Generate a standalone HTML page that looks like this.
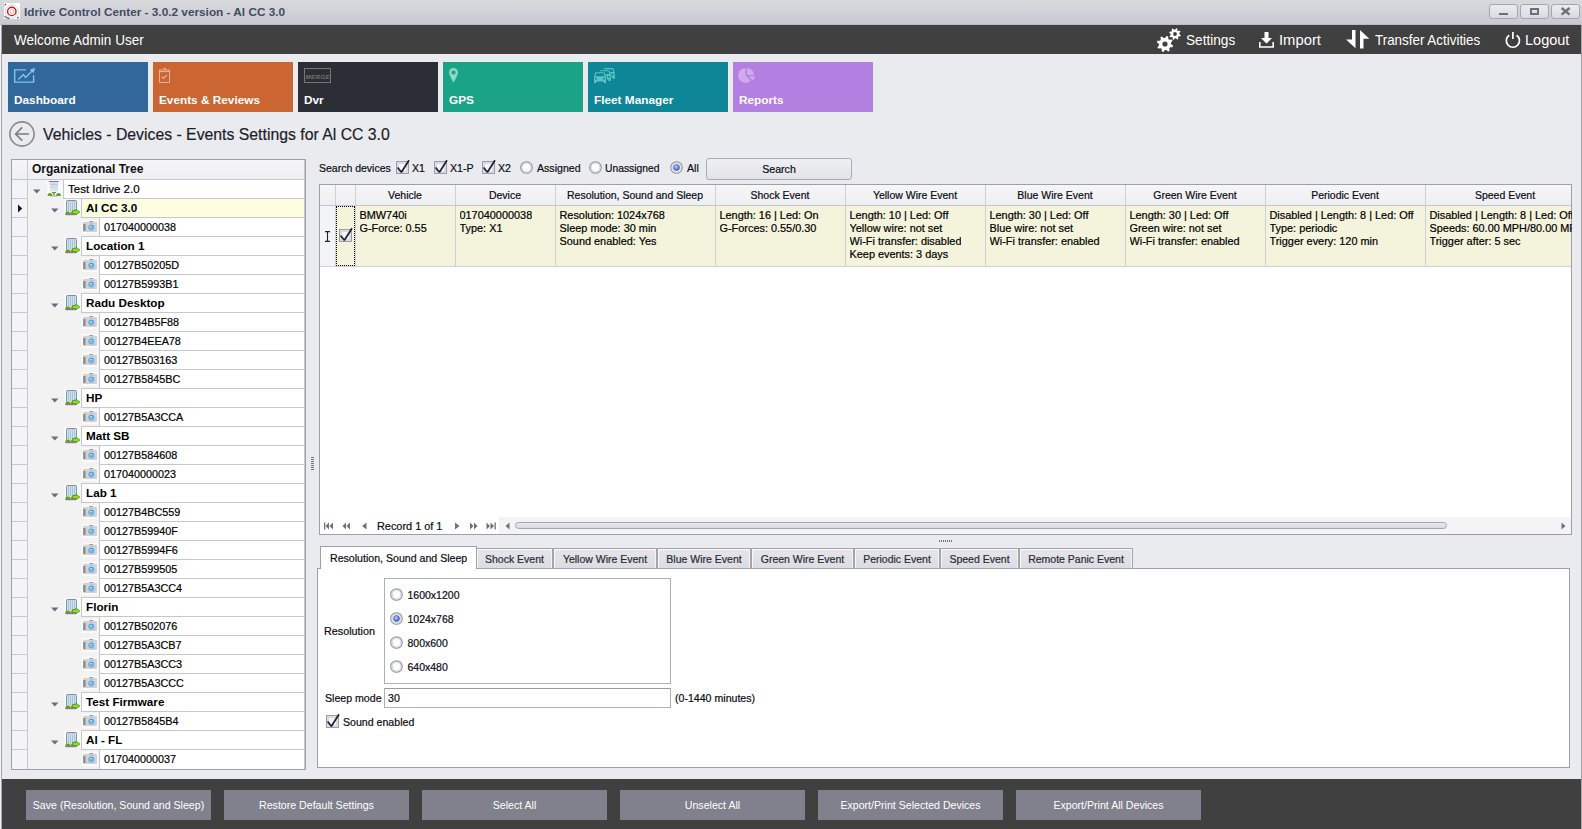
<!DOCTYPE html>
<html><head><meta charset="utf-8"><style>
*{box-sizing:border-box;margin:0;padding:0}
html,body{width:1582px;height:829px;overflow:hidden}
body{position:relative;background:#eaebef;font-family:"Liberation Sans",sans-serif;font-size:10.8px;color:#1e1e1e}
.a{position:absolute}
.t{position:absolute;white-space:nowrap;line-height:13px;-webkit-text-stroke:0.2px currentColor}
</style></head><body>
<div class="a" style="left:0;top:0;width:1px;height:829px;background:#f4f4f6"></div>
<div class="a" style="left:1px;top:25px;width:1px;height:804px;background:#a3a4ae"></div>
<div class="a" style="left:1581px;top:25px;width:1px;height:804px;background:#a3a4ae"></div>
<div class="a" style="left:0;top:0;width:1582px;height:25px;background:linear-gradient(#d9dade,#c8c9d1)"></div>
<div class="a" style="left:0;top:24px;width:1582px;height:1px;background:#babbc4"></div>
<svg class="a" style="left:4px;top:3px" width="16" height="16" viewBox="0 0 16 16">
<rect x="0" y="0" width="16" height="16" fill="#fdfdfd"/>
<circle cx="7.8" cy="8.4" r="6.6" fill="none" stroke="#d0d0d4" stroke-width="0.8"/>
<path d="M0.6 2.4 L2.2 0.8 M0.6 13.2 A7.3 7.3 0 0 0 5.4 15.6 M13.2 15.4 L14.6 14" fill="none" stroke="#555" stroke-width="1.1"/>
<circle cx="7.8" cy="8.4" r="4.2" fill="none" stroke="#e8101a" stroke-width="1.4"/>
<circle cx="7.8" cy="8.4" r="1.9" fill="none" stroke="#b4b4b8" stroke-width="0.7"/>
</svg>
<div class="t" style="left:24px;top:5px;font-size:11.8px;font-weight:bold;color:#434b62;line-height:14px;-webkit-text-stroke:0">Idrive Control Center - 3.0.2 version - Al CC 3.0</div>
<div class="a" style="left:1489px;top:4px;width:29px;height:15px;border:1px solid #a4a6b2;border-radius:3px;background:linear-gradient(#ececef,#d9dadf)"></div>
<div class="a" style="left:1520px;top:4px;width:29px;height:15px;border:1px solid #a4a6b2;border-radius:3px;background:linear-gradient(#ececef,#d9dadf)"></div>
<div class="a" style="left:1551px;top:4px;width:29px;height:15px;border:1px solid #a4a6b2;border-radius:3px;background:linear-gradient(#ececef,#d9dadf)"></div>
<div class="a" style="left:1499px;top:13px;width:9px;height:2px;background:#6c6e7a"></div>
<div class="a" style="left:1530px;top:8px;width:9px;height:7px;border:2px solid #6c6e7a"></div>
<svg class="a" style="left:1560px;top:7px" width="11" height="9" viewBox="0 0 11 9"><path d="M1.6 1 L9.6 7.6 M9.6 1 L1.6 7.6" stroke="#6c6e7a" stroke-width="2.3"/></svg>
<div class="a" style="left:2px;top:25px;width:1579px;height:29px;background:#404040"></div>
<div class="t" style="left:14px;top:32px;font-size:14.5px;color:#fff;line-height:16px;transform:scaleX(0.932);transform-origin:0 0;-webkit-text-stroke:0">Welcome Admin User</div>
<svg class="a" style="left:1155px;top:26px" width="28" height="28" viewBox="0 0 28 28">
<path fill="#fff" fill-rule="evenodd" d="M16.00 18.00 L18.04 19.60 L17.58 21.14 L14.99 21.33 L14.24 22.24 L14.56 24.82 L13.14 25.58 L11.17 23.88 L10.00 24.00 L8.40 26.04 L6.86 25.58 L6.67 22.99 L5.76 22.24 L3.18 22.56 L2.42 21.14 L4.12 19.17 L4.00 18.00 L1.96 16.40 L2.42 14.86 L5.01 14.67 L5.76 13.76 L5.44 11.18 L6.86 10.42 L8.83 12.12 L10.00 12.00 L11.60 9.96 L13.14 10.42 L13.33 13.01 L14.24 13.76 L16.82 13.44 L17.58 14.86 L15.88 16.83 Z M12.60 18.00 A2.6 2.6 0 1 0 7.40 18.00 A2.6 2.6 0 1 0 12.60 18.00 Z"/>
<path fill="#fff" fill-rule="evenodd" d="M24.30 8.00 L25.79 9.15 L25.45 10.26 L23.58 10.39 L23.04 11.04 L23.28 12.91 L22.26 13.45 L20.84 12.22 L20.00 12.30 L18.85 13.79 L17.74 13.45 L17.61 11.58 L16.96 11.04 L15.09 11.28 L14.55 10.26 L15.78 8.84 L15.70 8.00 L14.21 6.85 L14.55 5.74 L16.42 5.61 L16.96 4.96 L16.72 3.09 L17.74 2.55 L19.16 3.78 L20.00 3.70 L21.15 2.21 L22.26 2.55 L22.39 4.42 L23.04 4.96 L24.91 4.72 L25.45 5.74 L24.22 7.16 Z M21.90 8.00 A1.9 1.9 0 1 0 18.10 8.00 A1.9 1.9 0 1 0 21.90 8.00 Z"/>
</svg>
<div class="t" style="left:1186px;top:32px;font-size:14.5px;color:#fff;line-height:16px;transform:scaleX(0.94);transform-origin:0 0;-webkit-text-stroke:0">Settings</div>
<svg class="a" style="left:1258px;top:31px" width="18" height="18" viewBox="0 0 18 18">
<path fill="#fff" d="M6.5 1 H10.5 V7 H14 L8.5 12.5 L3 7 H6.5 Z"/>
<path fill="none" stroke="#fff" stroke-width="1.6" d="M1.8 11 V16 H15.2 V11"/>
</svg>
<div class="t" style="left:1279px;top:32px;font-size:14.5px;color:#fff;line-height:16px;transform:scaleX(1.02);transform-origin:0 0;-webkit-text-stroke:0">Import</div>
<svg class="a" style="left:1345px;top:29px" width="26" height="21" viewBox="0 0 26 21">
<path fill="#fff" d="M7 1 H10.5 V19.3 L1 10.5 H7 Z"/>
<path fill="#fff" d="M15 19.6 H18.5 V9.7 H24.3 L15 1 Z"/>
</svg>
<div class="t" style="left:1375px;top:32px;font-size:14.5px;color:#fff;line-height:16px;transform:scaleX(0.924);transform-origin:0 0;-webkit-text-stroke:0">Transfer Activities</div>
<svg class="a" style="left:1504px;top:31px" width="18" height="18" viewBox="0 0 18 18">
<path fill="none" stroke="#fff" stroke-width="1.7" d="M5.2 4.2 A6.6 6.6 0 1 0 12.6 4.2"/>
<path stroke="#fff" stroke-width="1.7" d="M8.9 1 V8"/>
</svg>
<div class="t" style="left:1525px;top:32px;font-size:14.5px;color:#fff;line-height:16px;-webkit-text-stroke:0">Logout</div>
<div class="a" style="left:8px;top:62px;width:140px;height:50px;background:#32679a"></div>
<div class="t" style="left:14px;top:93px;font-size:11.8px;font-weight:bold;color:#fff;line-height:14px;-webkit-text-stroke:0">Dashboard</div>
<div class="a" style="left:153px;top:62px;width:140px;height:50px;background:#cb6633"></div>
<div class="t" style="left:159px;top:93px;font-size:11.8px;font-weight:bold;color:#fff;line-height:14px;-webkit-text-stroke:0">Events &amp; Reviews</div>
<div class="a" style="left:298px;top:62px;width:140px;height:50px;background:#2b2e34"></div>
<div class="t" style="left:304px;top:93px;font-size:11.8px;font-weight:bold;color:#fff;line-height:14px;-webkit-text-stroke:0">Dvr</div>
<div class="a" style="left:443px;top:62px;width:140px;height:50px;background:#1aa386"></div>
<div class="t" style="left:449px;top:93px;font-size:11.8px;font-weight:bold;color:#fff;line-height:14px;-webkit-text-stroke:0">GPS</div>
<div class="a" style="left:588px;top:62px;width:140px;height:50px;background:#0e8698"></div>
<div class="t" style="left:594px;top:93px;font-size:11.8px;font-weight:bold;color:#fff;line-height:14px;-webkit-text-stroke:0">Fleet Manager</div>
<div class="a" style="left:733px;top:62px;width:140px;height:50px;background:#b37fe0"></div>
<div class="t" style="left:739px;top:93px;font-size:11.8px;font-weight:bold;color:#fff;line-height:14px;-webkit-text-stroke:0">Reports</div>
<svg class="a" style="left:8px;top:62px" width="40" height="30" viewBox="0 0 40 30">
<path fill="none" stroke="#7fc4ef" stroke-width="1.4" d="M18 7.9 H6.7 V20.1 H25.6 V13.2"/>
<path fill="none" stroke="#7fc4ef" stroke-width="1.4" d="M10.3 17.6 L15.4 12.5 L17.6 15.4 L24.5 8.5"/>
<path fill="#7fc4ef" d="M27 6 L21.8 7.4 L25.6 11.2 Z"/>
</svg>
<svg class="a" style="left:153px;top:62px" width="30" height="30" viewBox="0 0 30 30">
<g fill="none" stroke="#eab59a" stroke-width="1">
<path d="M6.5 8 H16.5 V20.5 H6.5 Z"/><path d="M6.5 9.6 H16.5"/><path d="M10.5 6.5 H12.5 V8"/>
<path d="M8.8 14.6 L10.5 16.4 L13.8 12.8" stroke-width="1.2"/>
</g></svg>
<svg class="a" style="left:298px;top:62px" width="40" height="30" viewBox="0 0 40 30">
<rect x="6.5" y="6.5" width="26" height="14" fill="none" stroke="#767676" stroke-width="1"/>
<text x="19.8" y="17.3" font-family="Liberation Sans" font-size="6.2" font-weight="bold" font-style="italic" fill="#737373" text-anchor="middle" letter-spacing="0.4">MERGE</text>
</svg>
<svg class="a" style="left:443px;top:62px" width="30" height="30" viewBox="0 0 30 30">
<path fill="#8fd6c4" fill-rule="evenodd" d="M10.5 6 A4.5 4.5 0 0 1 15 10.5 C15 12.5 13 16 10.5 20.8 C8 16 6 12.5 6 10.5 A4.5 4.5 0 0 1 10.5 6 Z M10.5 8.4 A2.1 2.1 0 1 0 10.5 12.6 A2.1 2.1 0 1 0 10.5 8.4 Z"/>
</svg>
<svg class="a" style="left:588px;top:62px" width="40" height="30" viewBox="0 0 40 30"><g transform="translate(14.8 6)"><path d="M0.9 4.2 L1.6 1 Q1.8 0.6 2.3 0.6 H9.7 Q10.2 0.6 10.4 1 L11.1 4.2" fill="none" stroke="#5bc4c4" stroke-width="1.1"/><path fill-rule="evenodd" d="M0 4 H12 V10.8 H9.7 V9.4 H2.3 V10.8 H0 Z M2 5.6 A0.95 0.95 0 1 0 2 7.5 A0.95 0.95 0 1 0 2 5.6 Z M10 5.6 A0.95 0.95 0 1 0 10 7.5 A0.95 0.95 0 1 0 10 5.6 Z" fill="#5bc4c4"/></g><g transform="translate(10.8 8.1)"><path d="M1.4 -0.6 H10.6 L11.8 3.3 L12.8 3.8 V11.4 H-0.8 V3.8 L0.2 3.3 Z" fill="#0e8698"/><path d="M0.9 4.2 L1.6 1 Q1.8 0.6 2.3 0.6 H9.7 Q10.2 0.6 10.4 1 L11.1 4.2" fill="none" stroke="#5bc4c4" stroke-width="1.1"/><path fill-rule="evenodd" d="M0 4 H12 V10.8 H9.7 V9.4 H2.3 V10.8 H0 Z M2 5.6 A0.95 0.95 0 1 0 2 7.5 A0.95 0.95 0 1 0 2 5.6 Z M10 5.6 A0.95 0.95 0 1 0 10 7.5 A0.95 0.95 0 1 0 10 5.6 Z" fill="#5bc4c4"/></g><g transform="translate(6 10.2)"><path d="M1.4 -0.6 H10.6 L11.8 3.3 L12.8 3.8 V11.4 H-0.8 V3.8 L0.2 3.3 Z" fill="#0e8698"/><path d="M0.9 4.2 L1.6 1 Q1.8 0.6 2.3 0.6 H9.7 Q10.2 0.6 10.4 1 L11.1 4.2" fill="none" stroke="#5bc4c4" stroke-width="1.1"/><path fill-rule="evenodd" d="M0 4 H12 V10.8 H9.7 V9.4 H2.3 V10.8 H0 Z M2 5.6 A0.95 0.95 0 1 0 2 7.5 A0.95 0.95 0 1 0 2 5.6 Z M10 5.6 A0.95 0.95 0 1 0 10 7.5 A0.95 0.95 0 1 0 10 5.6 Z" fill="#5bc4c4"/></g></svg>
<svg class="a" style="left:733px;top:62px" width="40" height="30" viewBox="0 0 40 30">
<g fill="#d1aaee">
<path d="M12.6 6.2 V13.4 L17.6 18.6 A7.3 7.3 0 1 1 12.6 6.2 Z"/>
<path d="M14 6 A7 7 0 0 1 21 13 H14 Z"/>
<path d="M15.6 14.2 H22 A7.2 7.2 0 0 1 20 18.8 Z"/>
</g></svg>
<svg class="a" style="left:8px;top:120px" width="28" height="28" viewBox="0 0 28 28">
<circle cx="14" cy="14" r="12.1" fill="none" stroke="#8a8a8e" stroke-width="1.6"/>
<path fill="none" stroke="#7c7c80" stroke-width="1.6" d="M20.9 14 H7.6 M14.2 7.4 L7.6 14 L14.2 20.6"/>
</svg>
<div class="t" style="left:43px;top:125px;font-size:15.8px;color:#1c1d2c;line-height:19px">Vehicles - Devices - Events Settings for Al CC 3.0</div>
<svg width="0" height="0" style="position:absolute"><defs><linearGradient id="lens" x1="0" y1="0" x2="0" y2="1"><stop offset="0" stop-color="#1e98e0"/><stop offset="0.55" stop-color="#50c8f8"/><stop offset="1" stop-color="#a890f0"/></linearGradient></defs></svg>
<div class="a" style="left:11px;top:159px;width:295px;height:611px;border:1px solid #9e9fab;background:#f2f2f2"></div>
<div class="a" style="left:12px;top:160px;width:293px;height:19px;background:linear-gradient(#f6f6f8,#eeeff2)"></div>
<div class="a" style="left:12px;top:179px;width:292px;height:1px;background:#c3c4cc"></div>
<div class="a" style="left:12px;top:180px;width:15px;height:589px;background:#f3f4f6"></div>
<div class="a" style="left:27px;top:160px;width:1px;height:609px;background:#c8c9d1"></div>
<div class="a" style="left:304px;top:160px;width:1px;height:609px;background:#c9c9cc"></div>
<div class="t" style="left:32px;top:162px;font-size:12px;font-weight:bold;color:#111;line-height:14px;-webkit-text-stroke:0">Organizational Tree</div>
<div class="a" style="left:12px;top:198px;width:15px;height:1px;background:#c8c9d1"></div>
<div class="a" style="left:63px;top:179px;width:241px;height:20px;border:1px solid #c6c7cc;border-right:0;background:#fff"></div>
<div class="t" style="left:68px;top:183px;font-size:11.5px;color:#000">Test Idrive 2.0</div>
<svg class="a" style="left:46px;top:180px" width="17" height="17" viewBox="0 0 17 17">
<rect x="1" y="0" width="15.5" height="17" fill="#f9f9f9"/>
<rect x="3" y="1" width="9.8" height="1" fill="#7c7c84"/>
<rect x="4" y="2" width="8" height="9.5" fill="#e4e4e6"/>
<rect x="4" y="3.5" width="8" height="1.6" fill="#9fd0f8"/>
<rect x="4" y="6.5" width="8" height="1" fill="#d0d0d4"/>
<rect x="4" y="8.5" width="8" height="1.2" fill="#c4e8fa"/>
<rect x="6" y="12" width="4" height="1" fill="#3a9a9a"/>
<rect x="7" y="13" width="2" height="2.6" fill="#e0980c"/>
<path d="M1.5 16 Q1.5 13 4 13 Q6.5 13 6.5 16 Z M10 16 Q10 13 12.5 13 Q15 13 15 16 Z" fill="#58a820"/>
<rect x="4" y="15.6" width="8" height="0.8" fill="#9a9ac8"/>
</svg>
<svg class="a" style="left:33px;top:189px" width="8" height="5" viewBox="0 0 8 5"><path d="M0 0.5 H7.5 L3.75 4.5 Z" fill="#6c6e7c"/></svg>
<div class="a" style="left:12px;top:217px;width:15px;height:1px;background:#c8c9d1"></div>
<div class="a" style="left:81px;top:198px;width:223px;height:20px;border:1px solid #c6c7cc;border-right:0;background:#fdfddf"></div>
<div class="t" style="left:86px;top:201px;font-size:11.7px;font-weight:bold;color:#000;-webkit-text-stroke:0">Al CC 3.0</div>
<svg class="a" style="left:64px;top:199px" width="17" height="17" viewBox="0 0 17 17">
<rect x="0" y="0" width="17" height="17" fill="#f9f9f9"/>
<rect x="2.5" y="1.5" width="10" height="11" fill="#b4b4b8"/>
<g fill="#c4ecff"><rect x="3.1" y="2" width="1.1" height="10.5"/><rect x="5.1" y="2" width="1.1" height="10.5"/><rect x="7.1" y="2" width="1.1" height="10.5"/><rect x="9.1" y="2" width="1.1" height="10.5"/><rect x="11.1" y="2" width="1.1" height="10.5"/></g>
<rect x="3" y="2" width="9.5" height="3" fill="#d8c8ff" opacity="0.35"/>
<path d="M2.5 12.8 V2.6 Q2.5 1.5 3.6 1.5 H11.4 Q12.5 1.5 12.5 2.6 V12.8" fill="none" stroke="#6a9aa0" stroke-width="0.9"/>
<path d="M3.6 1.5 H11.4" stroke="#8a8a90" stroke-width="0.9"/>
<path d="M1.2 15.6 Q1.2 12.6 3.6 12.6 Q6.4 12.6 6.8 15.6 Z" fill="#54a82c"/>
<rect x="6.6" y="13" width="2.4" height="2.4" fill="#e4701e"/>
<rect x="1.5" y="15.2" width="10.5" height="1" fill="#7a6080"/>
<path d="M8.4 11.6 H11.9 V10.2 L15.8 13 L11.9 15.8 V14.4 H8.4 Z" fill="#a4d818" stroke="#229a16" stroke-width="0.8"/>
</svg>
<svg class="a" style="left:51px;top:208px" width="8" height="5" viewBox="0 0 8 5"><path d="M0 0.5 H7.5 L3.75 4.5 Z" fill="#6c6e7c"/></svg>
<div class="a" style="left:12px;top:236px;width:15px;height:1px;background:#c8c9d1"></div>
<div class="a" style="left:99px;top:217px;width:205px;height:20px;border:1px solid #c6c7cc;border-right:0;background:#fff"></div>
<div class="t" style="left:104px;top:221px;font-size:10.8px;color:#000">017040000038</div>
<svg class="a" style="left:82px;top:220px" width="16" height="15" viewBox="0 0 16 15">
<rect x="0" y="0" width="16" height="14" fill="#fbfbfb"/>
<rect x="1" y="1.8" width="14" height="10.2" rx="1" fill="#d2d2d5"/>
<rect x="1.2" y="4" width="2.3" height="7" fill="#8a8a8e"/>
<rect x="7.4" y="1" width="3.6" height="1" fill="#9a9aa0"/>
<rect x="8" y="3" width="3" height="1" fill="#8ec8f8"/>
<circle cx="9.3" cy="7.6" r="3.2" fill="#b0b0b8"/>
<circle cx="9.3" cy="7.6" r="2.6" fill="url(#lens)"/>
<ellipse cx="9" cy="6.6" rx="1.1" ry="0.7" fill="#e0f4ff"/>
</svg>
<div class="a" style="left:12px;top:255px;width:15px;height:1px;background:#c8c9d1"></div>
<div class="a" style="left:81px;top:236px;width:223px;height:20px;border:1px solid #c6c7cc;border-right:0;background:#fff"></div>
<div class="t" style="left:86px;top:239px;font-size:11.7px;font-weight:bold;color:#000;-webkit-text-stroke:0">Location 1</div>
<svg class="a" style="left:64px;top:237px" width="17" height="17" viewBox="0 0 17 17">
<rect x="0" y="0" width="17" height="17" fill="#f9f9f9"/>
<rect x="2.5" y="1.5" width="10" height="11" fill="#b4b4b8"/>
<g fill="#c4ecff"><rect x="3.1" y="2" width="1.1" height="10.5"/><rect x="5.1" y="2" width="1.1" height="10.5"/><rect x="7.1" y="2" width="1.1" height="10.5"/><rect x="9.1" y="2" width="1.1" height="10.5"/><rect x="11.1" y="2" width="1.1" height="10.5"/></g>
<rect x="3" y="2" width="9.5" height="3" fill="#d8c8ff" opacity="0.35"/>
<path d="M2.5 12.8 V2.6 Q2.5 1.5 3.6 1.5 H11.4 Q12.5 1.5 12.5 2.6 V12.8" fill="none" stroke="#6a9aa0" stroke-width="0.9"/>
<path d="M3.6 1.5 H11.4" stroke="#8a8a90" stroke-width="0.9"/>
<path d="M1.2 15.6 Q1.2 12.6 3.6 12.6 Q6.4 12.6 6.8 15.6 Z" fill="#54a82c"/>
<rect x="6.6" y="13" width="2.4" height="2.4" fill="#e4701e"/>
<rect x="1.5" y="15.2" width="10.5" height="1" fill="#7a6080"/>
<path d="M8.4 11.6 H11.9 V10.2 L15.8 13 L11.9 15.8 V14.4 H8.4 Z" fill="#a4d818" stroke="#229a16" stroke-width="0.8"/>
</svg>
<svg class="a" style="left:51px;top:246px" width="8" height="5" viewBox="0 0 8 5"><path d="M0 0.5 H7.5 L3.75 4.5 Z" fill="#6c6e7c"/></svg>
<div class="a" style="left:12px;top:274px;width:15px;height:1px;background:#c8c9d1"></div>
<div class="a" style="left:99px;top:255px;width:205px;height:20px;border:1px solid #c6c7cc;border-right:0;background:#fff"></div>
<div class="t" style="left:104px;top:259px;font-size:10.8px;color:#000">00127B50205D</div>
<svg class="a" style="left:82px;top:258px" width="16" height="15" viewBox="0 0 16 15">
<rect x="0" y="0" width="16" height="14" fill="#fbfbfb"/>
<rect x="1" y="1.8" width="14" height="10.2" rx="1" fill="#d2d2d5"/>
<rect x="1.2" y="4" width="2.3" height="7" fill="#8a8a8e"/>
<rect x="7.4" y="1" width="3.6" height="1" fill="#9a9aa0"/>
<rect x="8" y="3" width="3" height="1" fill="#8ec8f8"/>
<circle cx="9.3" cy="7.6" r="3.2" fill="#b0b0b8"/>
<circle cx="9.3" cy="7.6" r="2.6" fill="url(#lens)"/>
<ellipse cx="9" cy="6.6" rx="1.1" ry="0.7" fill="#e0f4ff"/>
</svg>
<div class="a" style="left:12px;top:293px;width:15px;height:1px;background:#c8c9d1"></div>
<div class="a" style="left:99px;top:274px;width:205px;height:20px;border:1px solid #c6c7cc;border-right:0;background:#fff"></div>
<div class="t" style="left:104px;top:278px;font-size:10.8px;color:#000">00127B5993B1</div>
<svg class="a" style="left:82px;top:277px" width="16" height="15" viewBox="0 0 16 15">
<rect x="0" y="0" width="16" height="14" fill="#fbfbfb"/>
<rect x="1" y="1.8" width="14" height="10.2" rx="1" fill="#d2d2d5"/>
<rect x="1.2" y="4" width="2.3" height="7" fill="#8a8a8e"/>
<rect x="7.4" y="1" width="3.6" height="1" fill="#9a9aa0"/>
<rect x="8" y="3" width="3" height="1" fill="#8ec8f8"/>
<circle cx="9.3" cy="7.6" r="3.2" fill="#b0b0b8"/>
<circle cx="9.3" cy="7.6" r="2.6" fill="url(#lens)"/>
<ellipse cx="9" cy="6.6" rx="1.1" ry="0.7" fill="#e0f4ff"/>
</svg>
<div class="a" style="left:12px;top:312px;width:15px;height:1px;background:#c8c9d1"></div>
<div class="a" style="left:81px;top:293px;width:223px;height:20px;border:1px solid #c6c7cc;border-right:0;background:#fff"></div>
<div class="t" style="left:86px;top:296px;font-size:11.7px;font-weight:bold;color:#000;-webkit-text-stroke:0">Radu Desktop</div>
<svg class="a" style="left:64px;top:294px" width="17" height="17" viewBox="0 0 17 17">
<rect x="0" y="0" width="17" height="17" fill="#f9f9f9"/>
<rect x="2.5" y="1.5" width="10" height="11" fill="#b4b4b8"/>
<g fill="#c4ecff"><rect x="3.1" y="2" width="1.1" height="10.5"/><rect x="5.1" y="2" width="1.1" height="10.5"/><rect x="7.1" y="2" width="1.1" height="10.5"/><rect x="9.1" y="2" width="1.1" height="10.5"/><rect x="11.1" y="2" width="1.1" height="10.5"/></g>
<rect x="3" y="2" width="9.5" height="3" fill="#d8c8ff" opacity="0.35"/>
<path d="M2.5 12.8 V2.6 Q2.5 1.5 3.6 1.5 H11.4 Q12.5 1.5 12.5 2.6 V12.8" fill="none" stroke="#6a9aa0" stroke-width="0.9"/>
<path d="M3.6 1.5 H11.4" stroke="#8a8a90" stroke-width="0.9"/>
<path d="M1.2 15.6 Q1.2 12.6 3.6 12.6 Q6.4 12.6 6.8 15.6 Z" fill="#54a82c"/>
<rect x="6.6" y="13" width="2.4" height="2.4" fill="#e4701e"/>
<rect x="1.5" y="15.2" width="10.5" height="1" fill="#7a6080"/>
<path d="M8.4 11.6 H11.9 V10.2 L15.8 13 L11.9 15.8 V14.4 H8.4 Z" fill="#a4d818" stroke="#229a16" stroke-width="0.8"/>
</svg>
<svg class="a" style="left:51px;top:303px" width="8" height="5" viewBox="0 0 8 5"><path d="M0 0.5 H7.5 L3.75 4.5 Z" fill="#6c6e7c"/></svg>
<div class="a" style="left:12px;top:331px;width:15px;height:1px;background:#c8c9d1"></div>
<div class="a" style="left:99px;top:312px;width:205px;height:20px;border:1px solid #c6c7cc;border-right:0;background:#fff"></div>
<div class="t" style="left:104px;top:316px;font-size:10.8px;color:#000">00127B4B5F88</div>
<svg class="a" style="left:82px;top:315px" width="16" height="15" viewBox="0 0 16 15">
<rect x="0" y="0" width="16" height="14" fill="#fbfbfb"/>
<rect x="1" y="1.8" width="14" height="10.2" rx="1" fill="#d2d2d5"/>
<rect x="1.2" y="4" width="2.3" height="7" fill="#8a8a8e"/>
<rect x="7.4" y="1" width="3.6" height="1" fill="#9a9aa0"/>
<rect x="8" y="3" width="3" height="1" fill="#8ec8f8"/>
<circle cx="9.3" cy="7.6" r="3.2" fill="#b0b0b8"/>
<circle cx="9.3" cy="7.6" r="2.6" fill="url(#lens)"/>
<ellipse cx="9" cy="6.6" rx="1.1" ry="0.7" fill="#e0f4ff"/>
</svg>
<div class="a" style="left:12px;top:350px;width:15px;height:1px;background:#c8c9d1"></div>
<div class="a" style="left:99px;top:331px;width:205px;height:20px;border:1px solid #c6c7cc;border-right:0;background:#fff"></div>
<div class="t" style="left:104px;top:335px;font-size:10.8px;color:#000">00127B4EEA78</div>
<svg class="a" style="left:82px;top:334px" width="16" height="15" viewBox="0 0 16 15">
<rect x="0" y="0" width="16" height="14" fill="#fbfbfb"/>
<rect x="1" y="1.8" width="14" height="10.2" rx="1" fill="#d2d2d5"/>
<rect x="1.2" y="4" width="2.3" height="7" fill="#8a8a8e"/>
<rect x="7.4" y="1" width="3.6" height="1" fill="#9a9aa0"/>
<rect x="8" y="3" width="3" height="1" fill="#8ec8f8"/>
<circle cx="9.3" cy="7.6" r="3.2" fill="#b0b0b8"/>
<circle cx="9.3" cy="7.6" r="2.6" fill="url(#lens)"/>
<ellipse cx="9" cy="6.6" rx="1.1" ry="0.7" fill="#e0f4ff"/>
</svg>
<div class="a" style="left:12px;top:369px;width:15px;height:1px;background:#c8c9d1"></div>
<div class="a" style="left:99px;top:350px;width:205px;height:20px;border:1px solid #c6c7cc;border-right:0;background:#fff"></div>
<div class="t" style="left:104px;top:354px;font-size:10.8px;color:#000">00127B503163</div>
<svg class="a" style="left:82px;top:353px" width="16" height="15" viewBox="0 0 16 15">
<rect x="0" y="0" width="16" height="14" fill="#fbfbfb"/>
<rect x="1" y="1.8" width="14" height="10.2" rx="1" fill="#d2d2d5"/>
<rect x="1.2" y="4" width="2.3" height="7" fill="#8a8a8e"/>
<rect x="7.4" y="1" width="3.6" height="1" fill="#9a9aa0"/>
<rect x="8" y="3" width="3" height="1" fill="#8ec8f8"/>
<circle cx="9.3" cy="7.6" r="3.2" fill="#b0b0b8"/>
<circle cx="9.3" cy="7.6" r="2.6" fill="url(#lens)"/>
<ellipse cx="9" cy="6.6" rx="1.1" ry="0.7" fill="#e0f4ff"/>
</svg>
<div class="a" style="left:12px;top:388px;width:15px;height:1px;background:#c8c9d1"></div>
<div class="a" style="left:99px;top:369px;width:205px;height:20px;border:1px solid #c6c7cc;border-right:0;background:#fff"></div>
<div class="t" style="left:104px;top:373px;font-size:10.8px;color:#000">00127B5845BC</div>
<svg class="a" style="left:82px;top:372px" width="16" height="15" viewBox="0 0 16 15">
<rect x="0" y="0" width="16" height="14" fill="#fbfbfb"/>
<rect x="1" y="1.8" width="14" height="10.2" rx="1" fill="#d2d2d5"/>
<rect x="1.2" y="4" width="2.3" height="7" fill="#8a8a8e"/>
<rect x="7.4" y="1" width="3.6" height="1" fill="#9a9aa0"/>
<rect x="8" y="3" width="3" height="1" fill="#8ec8f8"/>
<circle cx="9.3" cy="7.6" r="3.2" fill="#b0b0b8"/>
<circle cx="9.3" cy="7.6" r="2.6" fill="url(#lens)"/>
<ellipse cx="9" cy="6.6" rx="1.1" ry="0.7" fill="#e0f4ff"/>
</svg>
<div class="a" style="left:12px;top:407px;width:15px;height:1px;background:#c8c9d1"></div>
<div class="a" style="left:81px;top:388px;width:223px;height:20px;border:1px solid #c6c7cc;border-right:0;background:#fff"></div>
<div class="t" style="left:86px;top:391px;font-size:11.7px;font-weight:bold;color:#000;-webkit-text-stroke:0">HP</div>
<svg class="a" style="left:64px;top:389px" width="17" height="17" viewBox="0 0 17 17">
<rect x="0" y="0" width="17" height="17" fill="#f9f9f9"/>
<rect x="2.5" y="1.5" width="10" height="11" fill="#b4b4b8"/>
<g fill="#c4ecff"><rect x="3.1" y="2" width="1.1" height="10.5"/><rect x="5.1" y="2" width="1.1" height="10.5"/><rect x="7.1" y="2" width="1.1" height="10.5"/><rect x="9.1" y="2" width="1.1" height="10.5"/><rect x="11.1" y="2" width="1.1" height="10.5"/></g>
<rect x="3" y="2" width="9.5" height="3" fill="#d8c8ff" opacity="0.35"/>
<path d="M2.5 12.8 V2.6 Q2.5 1.5 3.6 1.5 H11.4 Q12.5 1.5 12.5 2.6 V12.8" fill="none" stroke="#6a9aa0" stroke-width="0.9"/>
<path d="M3.6 1.5 H11.4" stroke="#8a8a90" stroke-width="0.9"/>
<path d="M1.2 15.6 Q1.2 12.6 3.6 12.6 Q6.4 12.6 6.8 15.6 Z" fill="#54a82c"/>
<rect x="6.6" y="13" width="2.4" height="2.4" fill="#e4701e"/>
<rect x="1.5" y="15.2" width="10.5" height="1" fill="#7a6080"/>
<path d="M8.4 11.6 H11.9 V10.2 L15.8 13 L11.9 15.8 V14.4 H8.4 Z" fill="#a4d818" stroke="#229a16" stroke-width="0.8"/>
</svg>
<svg class="a" style="left:51px;top:398px" width="8" height="5" viewBox="0 0 8 5"><path d="M0 0.5 H7.5 L3.75 4.5 Z" fill="#6c6e7c"/></svg>
<div class="a" style="left:12px;top:426px;width:15px;height:1px;background:#c8c9d1"></div>
<div class="a" style="left:99px;top:407px;width:205px;height:20px;border:1px solid #c6c7cc;border-right:0;background:#fff"></div>
<div class="t" style="left:104px;top:411px;font-size:10.8px;color:#000">00127B5A3CCA</div>
<svg class="a" style="left:82px;top:410px" width="16" height="15" viewBox="0 0 16 15">
<rect x="0" y="0" width="16" height="14" fill="#fbfbfb"/>
<rect x="1" y="1.8" width="14" height="10.2" rx="1" fill="#d2d2d5"/>
<rect x="1.2" y="4" width="2.3" height="7" fill="#8a8a8e"/>
<rect x="7.4" y="1" width="3.6" height="1" fill="#9a9aa0"/>
<rect x="8" y="3" width="3" height="1" fill="#8ec8f8"/>
<circle cx="9.3" cy="7.6" r="3.2" fill="#b0b0b8"/>
<circle cx="9.3" cy="7.6" r="2.6" fill="url(#lens)"/>
<ellipse cx="9" cy="6.6" rx="1.1" ry="0.7" fill="#e0f4ff"/>
</svg>
<div class="a" style="left:12px;top:445px;width:15px;height:1px;background:#c8c9d1"></div>
<div class="a" style="left:81px;top:426px;width:223px;height:20px;border:1px solid #c6c7cc;border-right:0;background:#fff"></div>
<div class="t" style="left:86px;top:429px;font-size:11.7px;font-weight:bold;color:#000;-webkit-text-stroke:0">Matt SB</div>
<svg class="a" style="left:64px;top:427px" width="17" height="17" viewBox="0 0 17 17">
<rect x="0" y="0" width="17" height="17" fill="#f9f9f9"/>
<rect x="2.5" y="1.5" width="10" height="11" fill="#b4b4b8"/>
<g fill="#c4ecff"><rect x="3.1" y="2" width="1.1" height="10.5"/><rect x="5.1" y="2" width="1.1" height="10.5"/><rect x="7.1" y="2" width="1.1" height="10.5"/><rect x="9.1" y="2" width="1.1" height="10.5"/><rect x="11.1" y="2" width="1.1" height="10.5"/></g>
<rect x="3" y="2" width="9.5" height="3" fill="#d8c8ff" opacity="0.35"/>
<path d="M2.5 12.8 V2.6 Q2.5 1.5 3.6 1.5 H11.4 Q12.5 1.5 12.5 2.6 V12.8" fill="none" stroke="#6a9aa0" stroke-width="0.9"/>
<path d="M3.6 1.5 H11.4" stroke="#8a8a90" stroke-width="0.9"/>
<path d="M1.2 15.6 Q1.2 12.6 3.6 12.6 Q6.4 12.6 6.8 15.6 Z" fill="#54a82c"/>
<rect x="6.6" y="13" width="2.4" height="2.4" fill="#e4701e"/>
<rect x="1.5" y="15.2" width="10.5" height="1" fill="#7a6080"/>
<path d="M8.4 11.6 H11.9 V10.2 L15.8 13 L11.9 15.8 V14.4 H8.4 Z" fill="#a4d818" stroke="#229a16" stroke-width="0.8"/>
</svg>
<svg class="a" style="left:51px;top:436px" width="8" height="5" viewBox="0 0 8 5"><path d="M0 0.5 H7.5 L3.75 4.5 Z" fill="#6c6e7c"/></svg>
<div class="a" style="left:12px;top:464px;width:15px;height:1px;background:#c8c9d1"></div>
<div class="a" style="left:99px;top:445px;width:205px;height:20px;border:1px solid #c6c7cc;border-right:0;background:#fff"></div>
<div class="t" style="left:104px;top:449px;font-size:10.8px;color:#000">00127B584608</div>
<svg class="a" style="left:82px;top:448px" width="16" height="15" viewBox="0 0 16 15">
<rect x="0" y="0" width="16" height="14" fill="#fbfbfb"/>
<rect x="1" y="1.8" width="14" height="10.2" rx="1" fill="#d2d2d5"/>
<rect x="1.2" y="4" width="2.3" height="7" fill="#8a8a8e"/>
<rect x="7.4" y="1" width="3.6" height="1" fill="#9a9aa0"/>
<rect x="8" y="3" width="3" height="1" fill="#8ec8f8"/>
<circle cx="9.3" cy="7.6" r="3.2" fill="#b0b0b8"/>
<circle cx="9.3" cy="7.6" r="2.6" fill="url(#lens)"/>
<ellipse cx="9" cy="6.6" rx="1.1" ry="0.7" fill="#e0f4ff"/>
</svg>
<div class="a" style="left:12px;top:483px;width:15px;height:1px;background:#c8c9d1"></div>
<div class="a" style="left:99px;top:464px;width:205px;height:20px;border:1px solid #c6c7cc;border-right:0;background:#fff"></div>
<div class="t" style="left:104px;top:468px;font-size:10.8px;color:#000">017040000023</div>
<svg class="a" style="left:82px;top:467px" width="16" height="15" viewBox="0 0 16 15">
<rect x="0" y="0" width="16" height="14" fill="#fbfbfb"/>
<rect x="1" y="1.8" width="14" height="10.2" rx="1" fill="#d2d2d5"/>
<rect x="1.2" y="4" width="2.3" height="7" fill="#8a8a8e"/>
<rect x="7.4" y="1" width="3.6" height="1" fill="#9a9aa0"/>
<rect x="8" y="3" width="3" height="1" fill="#8ec8f8"/>
<circle cx="9.3" cy="7.6" r="3.2" fill="#b0b0b8"/>
<circle cx="9.3" cy="7.6" r="2.6" fill="url(#lens)"/>
<ellipse cx="9" cy="6.6" rx="1.1" ry="0.7" fill="#e0f4ff"/>
</svg>
<div class="a" style="left:12px;top:502px;width:15px;height:1px;background:#c8c9d1"></div>
<div class="a" style="left:81px;top:483px;width:223px;height:20px;border:1px solid #c6c7cc;border-right:0;background:#fff"></div>
<div class="t" style="left:86px;top:486px;font-size:11.7px;font-weight:bold;color:#000;-webkit-text-stroke:0">Lab 1</div>
<svg class="a" style="left:64px;top:484px" width="17" height="17" viewBox="0 0 17 17">
<rect x="0" y="0" width="17" height="17" fill="#f9f9f9"/>
<rect x="2.5" y="1.5" width="10" height="11" fill="#b4b4b8"/>
<g fill="#c4ecff"><rect x="3.1" y="2" width="1.1" height="10.5"/><rect x="5.1" y="2" width="1.1" height="10.5"/><rect x="7.1" y="2" width="1.1" height="10.5"/><rect x="9.1" y="2" width="1.1" height="10.5"/><rect x="11.1" y="2" width="1.1" height="10.5"/></g>
<rect x="3" y="2" width="9.5" height="3" fill="#d8c8ff" opacity="0.35"/>
<path d="M2.5 12.8 V2.6 Q2.5 1.5 3.6 1.5 H11.4 Q12.5 1.5 12.5 2.6 V12.8" fill="none" stroke="#6a9aa0" stroke-width="0.9"/>
<path d="M3.6 1.5 H11.4" stroke="#8a8a90" stroke-width="0.9"/>
<path d="M1.2 15.6 Q1.2 12.6 3.6 12.6 Q6.4 12.6 6.8 15.6 Z" fill="#54a82c"/>
<rect x="6.6" y="13" width="2.4" height="2.4" fill="#e4701e"/>
<rect x="1.5" y="15.2" width="10.5" height="1" fill="#7a6080"/>
<path d="M8.4 11.6 H11.9 V10.2 L15.8 13 L11.9 15.8 V14.4 H8.4 Z" fill="#a4d818" stroke="#229a16" stroke-width="0.8"/>
</svg>
<svg class="a" style="left:51px;top:493px" width="8" height="5" viewBox="0 0 8 5"><path d="M0 0.5 H7.5 L3.75 4.5 Z" fill="#6c6e7c"/></svg>
<div class="a" style="left:12px;top:521px;width:15px;height:1px;background:#c8c9d1"></div>
<div class="a" style="left:99px;top:502px;width:205px;height:20px;border:1px solid #c6c7cc;border-right:0;background:#fff"></div>
<div class="t" style="left:104px;top:506px;font-size:10.8px;color:#000">00127B4BC559</div>
<svg class="a" style="left:82px;top:505px" width="16" height="15" viewBox="0 0 16 15">
<rect x="0" y="0" width="16" height="14" fill="#fbfbfb"/>
<rect x="1" y="1.8" width="14" height="10.2" rx="1" fill="#d2d2d5"/>
<rect x="1.2" y="4" width="2.3" height="7" fill="#8a8a8e"/>
<rect x="7.4" y="1" width="3.6" height="1" fill="#9a9aa0"/>
<rect x="8" y="3" width="3" height="1" fill="#8ec8f8"/>
<circle cx="9.3" cy="7.6" r="3.2" fill="#b0b0b8"/>
<circle cx="9.3" cy="7.6" r="2.6" fill="url(#lens)"/>
<ellipse cx="9" cy="6.6" rx="1.1" ry="0.7" fill="#e0f4ff"/>
</svg>
<div class="a" style="left:12px;top:540px;width:15px;height:1px;background:#c8c9d1"></div>
<div class="a" style="left:99px;top:521px;width:205px;height:20px;border:1px solid #c6c7cc;border-right:0;background:#fff"></div>
<div class="t" style="left:104px;top:525px;font-size:10.8px;color:#000">00127B59940F</div>
<svg class="a" style="left:82px;top:524px" width="16" height="15" viewBox="0 0 16 15">
<rect x="0" y="0" width="16" height="14" fill="#fbfbfb"/>
<rect x="1" y="1.8" width="14" height="10.2" rx="1" fill="#d2d2d5"/>
<rect x="1.2" y="4" width="2.3" height="7" fill="#8a8a8e"/>
<rect x="7.4" y="1" width="3.6" height="1" fill="#9a9aa0"/>
<rect x="8" y="3" width="3" height="1" fill="#8ec8f8"/>
<circle cx="9.3" cy="7.6" r="3.2" fill="#b0b0b8"/>
<circle cx="9.3" cy="7.6" r="2.6" fill="url(#lens)"/>
<ellipse cx="9" cy="6.6" rx="1.1" ry="0.7" fill="#e0f4ff"/>
</svg>
<div class="a" style="left:12px;top:559px;width:15px;height:1px;background:#c8c9d1"></div>
<div class="a" style="left:99px;top:540px;width:205px;height:20px;border:1px solid #c6c7cc;border-right:0;background:#fff"></div>
<div class="t" style="left:104px;top:544px;font-size:10.8px;color:#000">00127B5994F6</div>
<svg class="a" style="left:82px;top:543px" width="16" height="15" viewBox="0 0 16 15">
<rect x="0" y="0" width="16" height="14" fill="#fbfbfb"/>
<rect x="1" y="1.8" width="14" height="10.2" rx="1" fill="#d2d2d5"/>
<rect x="1.2" y="4" width="2.3" height="7" fill="#8a8a8e"/>
<rect x="7.4" y="1" width="3.6" height="1" fill="#9a9aa0"/>
<rect x="8" y="3" width="3" height="1" fill="#8ec8f8"/>
<circle cx="9.3" cy="7.6" r="3.2" fill="#b0b0b8"/>
<circle cx="9.3" cy="7.6" r="2.6" fill="url(#lens)"/>
<ellipse cx="9" cy="6.6" rx="1.1" ry="0.7" fill="#e0f4ff"/>
</svg>
<div class="a" style="left:12px;top:578px;width:15px;height:1px;background:#c8c9d1"></div>
<div class="a" style="left:99px;top:559px;width:205px;height:20px;border:1px solid #c6c7cc;border-right:0;background:#fff"></div>
<div class="t" style="left:104px;top:563px;font-size:10.8px;color:#000">00127B599505</div>
<svg class="a" style="left:82px;top:562px" width="16" height="15" viewBox="0 0 16 15">
<rect x="0" y="0" width="16" height="14" fill="#fbfbfb"/>
<rect x="1" y="1.8" width="14" height="10.2" rx="1" fill="#d2d2d5"/>
<rect x="1.2" y="4" width="2.3" height="7" fill="#8a8a8e"/>
<rect x="7.4" y="1" width="3.6" height="1" fill="#9a9aa0"/>
<rect x="8" y="3" width="3" height="1" fill="#8ec8f8"/>
<circle cx="9.3" cy="7.6" r="3.2" fill="#b0b0b8"/>
<circle cx="9.3" cy="7.6" r="2.6" fill="url(#lens)"/>
<ellipse cx="9" cy="6.6" rx="1.1" ry="0.7" fill="#e0f4ff"/>
</svg>
<div class="a" style="left:12px;top:597px;width:15px;height:1px;background:#c8c9d1"></div>
<div class="a" style="left:99px;top:578px;width:205px;height:20px;border:1px solid #c6c7cc;border-right:0;background:#fff"></div>
<div class="t" style="left:104px;top:582px;font-size:10.8px;color:#000">00127B5A3CC4</div>
<svg class="a" style="left:82px;top:581px" width="16" height="15" viewBox="0 0 16 15">
<rect x="0" y="0" width="16" height="14" fill="#fbfbfb"/>
<rect x="1" y="1.8" width="14" height="10.2" rx="1" fill="#d2d2d5"/>
<rect x="1.2" y="4" width="2.3" height="7" fill="#8a8a8e"/>
<rect x="7.4" y="1" width="3.6" height="1" fill="#9a9aa0"/>
<rect x="8" y="3" width="3" height="1" fill="#8ec8f8"/>
<circle cx="9.3" cy="7.6" r="3.2" fill="#b0b0b8"/>
<circle cx="9.3" cy="7.6" r="2.6" fill="url(#lens)"/>
<ellipse cx="9" cy="6.6" rx="1.1" ry="0.7" fill="#e0f4ff"/>
</svg>
<div class="a" style="left:12px;top:616px;width:15px;height:1px;background:#c8c9d1"></div>
<div class="a" style="left:81px;top:597px;width:223px;height:20px;border:1px solid #c6c7cc;border-right:0;background:#fff"></div>
<div class="t" style="left:86px;top:600px;font-size:11.7px;font-weight:bold;color:#000;-webkit-text-stroke:0">Florin</div>
<svg class="a" style="left:64px;top:598px" width="17" height="17" viewBox="0 0 17 17">
<rect x="0" y="0" width="17" height="17" fill="#f9f9f9"/>
<rect x="2.5" y="1.5" width="10" height="11" fill="#b4b4b8"/>
<g fill="#c4ecff"><rect x="3.1" y="2" width="1.1" height="10.5"/><rect x="5.1" y="2" width="1.1" height="10.5"/><rect x="7.1" y="2" width="1.1" height="10.5"/><rect x="9.1" y="2" width="1.1" height="10.5"/><rect x="11.1" y="2" width="1.1" height="10.5"/></g>
<rect x="3" y="2" width="9.5" height="3" fill="#d8c8ff" opacity="0.35"/>
<path d="M2.5 12.8 V2.6 Q2.5 1.5 3.6 1.5 H11.4 Q12.5 1.5 12.5 2.6 V12.8" fill="none" stroke="#6a9aa0" stroke-width="0.9"/>
<path d="M3.6 1.5 H11.4" stroke="#8a8a90" stroke-width="0.9"/>
<path d="M1.2 15.6 Q1.2 12.6 3.6 12.6 Q6.4 12.6 6.8 15.6 Z" fill="#54a82c"/>
<rect x="6.6" y="13" width="2.4" height="2.4" fill="#e4701e"/>
<rect x="1.5" y="15.2" width="10.5" height="1" fill="#7a6080"/>
<path d="M8.4 11.6 H11.9 V10.2 L15.8 13 L11.9 15.8 V14.4 H8.4 Z" fill="#a4d818" stroke="#229a16" stroke-width="0.8"/>
</svg>
<svg class="a" style="left:51px;top:607px" width="8" height="5" viewBox="0 0 8 5"><path d="M0 0.5 H7.5 L3.75 4.5 Z" fill="#6c6e7c"/></svg>
<div class="a" style="left:12px;top:635px;width:15px;height:1px;background:#c8c9d1"></div>
<div class="a" style="left:99px;top:616px;width:205px;height:20px;border:1px solid #c6c7cc;border-right:0;background:#fff"></div>
<div class="t" style="left:104px;top:620px;font-size:10.8px;color:#000">00127B502076</div>
<svg class="a" style="left:82px;top:619px" width="16" height="15" viewBox="0 0 16 15">
<rect x="0" y="0" width="16" height="14" fill="#fbfbfb"/>
<rect x="1" y="1.8" width="14" height="10.2" rx="1" fill="#d2d2d5"/>
<rect x="1.2" y="4" width="2.3" height="7" fill="#8a8a8e"/>
<rect x="7.4" y="1" width="3.6" height="1" fill="#9a9aa0"/>
<rect x="8" y="3" width="3" height="1" fill="#8ec8f8"/>
<circle cx="9.3" cy="7.6" r="3.2" fill="#b0b0b8"/>
<circle cx="9.3" cy="7.6" r="2.6" fill="url(#lens)"/>
<ellipse cx="9" cy="6.6" rx="1.1" ry="0.7" fill="#e0f4ff"/>
</svg>
<div class="a" style="left:12px;top:654px;width:15px;height:1px;background:#c8c9d1"></div>
<div class="a" style="left:99px;top:635px;width:205px;height:20px;border:1px solid #c6c7cc;border-right:0;background:#fff"></div>
<div class="t" style="left:104px;top:639px;font-size:10.8px;color:#000">00127B5A3CB7</div>
<svg class="a" style="left:82px;top:638px" width="16" height="15" viewBox="0 0 16 15">
<rect x="0" y="0" width="16" height="14" fill="#fbfbfb"/>
<rect x="1" y="1.8" width="14" height="10.2" rx="1" fill="#d2d2d5"/>
<rect x="1.2" y="4" width="2.3" height="7" fill="#8a8a8e"/>
<rect x="7.4" y="1" width="3.6" height="1" fill="#9a9aa0"/>
<rect x="8" y="3" width="3" height="1" fill="#8ec8f8"/>
<circle cx="9.3" cy="7.6" r="3.2" fill="#b0b0b8"/>
<circle cx="9.3" cy="7.6" r="2.6" fill="url(#lens)"/>
<ellipse cx="9" cy="6.6" rx="1.1" ry="0.7" fill="#e0f4ff"/>
</svg>
<div class="a" style="left:12px;top:673px;width:15px;height:1px;background:#c8c9d1"></div>
<div class="a" style="left:99px;top:654px;width:205px;height:20px;border:1px solid #c6c7cc;border-right:0;background:#fff"></div>
<div class="t" style="left:104px;top:658px;font-size:10.8px;color:#000">00127B5A3CC3</div>
<svg class="a" style="left:82px;top:657px" width="16" height="15" viewBox="0 0 16 15">
<rect x="0" y="0" width="16" height="14" fill="#fbfbfb"/>
<rect x="1" y="1.8" width="14" height="10.2" rx="1" fill="#d2d2d5"/>
<rect x="1.2" y="4" width="2.3" height="7" fill="#8a8a8e"/>
<rect x="7.4" y="1" width="3.6" height="1" fill="#9a9aa0"/>
<rect x="8" y="3" width="3" height="1" fill="#8ec8f8"/>
<circle cx="9.3" cy="7.6" r="3.2" fill="#b0b0b8"/>
<circle cx="9.3" cy="7.6" r="2.6" fill="url(#lens)"/>
<ellipse cx="9" cy="6.6" rx="1.1" ry="0.7" fill="#e0f4ff"/>
</svg>
<div class="a" style="left:12px;top:692px;width:15px;height:1px;background:#c8c9d1"></div>
<div class="a" style="left:99px;top:673px;width:205px;height:20px;border:1px solid #c6c7cc;border-right:0;background:#fff"></div>
<div class="t" style="left:104px;top:677px;font-size:10.8px;color:#000">00127B5A3CCC</div>
<svg class="a" style="left:82px;top:676px" width="16" height="15" viewBox="0 0 16 15">
<rect x="0" y="0" width="16" height="14" fill="#fbfbfb"/>
<rect x="1" y="1.8" width="14" height="10.2" rx="1" fill="#d2d2d5"/>
<rect x="1.2" y="4" width="2.3" height="7" fill="#8a8a8e"/>
<rect x="7.4" y="1" width="3.6" height="1" fill="#9a9aa0"/>
<rect x="8" y="3" width="3" height="1" fill="#8ec8f8"/>
<circle cx="9.3" cy="7.6" r="3.2" fill="#b0b0b8"/>
<circle cx="9.3" cy="7.6" r="2.6" fill="url(#lens)"/>
<ellipse cx="9" cy="6.6" rx="1.1" ry="0.7" fill="#e0f4ff"/>
</svg>
<div class="a" style="left:12px;top:711px;width:15px;height:1px;background:#c8c9d1"></div>
<div class="a" style="left:81px;top:692px;width:223px;height:20px;border:1px solid #c6c7cc;border-right:0;background:#fff"></div>
<div class="t" style="left:86px;top:695px;font-size:11.7px;font-weight:bold;color:#000;-webkit-text-stroke:0">Test Firmware</div>
<svg class="a" style="left:64px;top:693px" width="17" height="17" viewBox="0 0 17 17">
<rect x="0" y="0" width="17" height="17" fill="#f9f9f9"/>
<rect x="2.5" y="1.5" width="10" height="11" fill="#b4b4b8"/>
<g fill="#c4ecff"><rect x="3.1" y="2" width="1.1" height="10.5"/><rect x="5.1" y="2" width="1.1" height="10.5"/><rect x="7.1" y="2" width="1.1" height="10.5"/><rect x="9.1" y="2" width="1.1" height="10.5"/><rect x="11.1" y="2" width="1.1" height="10.5"/></g>
<rect x="3" y="2" width="9.5" height="3" fill="#d8c8ff" opacity="0.35"/>
<path d="M2.5 12.8 V2.6 Q2.5 1.5 3.6 1.5 H11.4 Q12.5 1.5 12.5 2.6 V12.8" fill="none" stroke="#6a9aa0" stroke-width="0.9"/>
<path d="M3.6 1.5 H11.4" stroke="#8a8a90" stroke-width="0.9"/>
<path d="M1.2 15.6 Q1.2 12.6 3.6 12.6 Q6.4 12.6 6.8 15.6 Z" fill="#54a82c"/>
<rect x="6.6" y="13" width="2.4" height="2.4" fill="#e4701e"/>
<rect x="1.5" y="15.2" width="10.5" height="1" fill="#7a6080"/>
<path d="M8.4 11.6 H11.9 V10.2 L15.8 13 L11.9 15.8 V14.4 H8.4 Z" fill="#a4d818" stroke="#229a16" stroke-width="0.8"/>
</svg>
<svg class="a" style="left:51px;top:702px" width="8" height="5" viewBox="0 0 8 5"><path d="M0 0.5 H7.5 L3.75 4.5 Z" fill="#6c6e7c"/></svg>
<div class="a" style="left:12px;top:730px;width:15px;height:1px;background:#c8c9d1"></div>
<div class="a" style="left:99px;top:711px;width:205px;height:20px;border:1px solid #c6c7cc;border-right:0;background:#fff"></div>
<div class="t" style="left:104px;top:715px;font-size:10.8px;color:#000">00127B5845B4</div>
<svg class="a" style="left:82px;top:714px" width="16" height="15" viewBox="0 0 16 15">
<rect x="0" y="0" width="16" height="14" fill="#fbfbfb"/>
<rect x="1" y="1.8" width="14" height="10.2" rx="1" fill="#d2d2d5"/>
<rect x="1.2" y="4" width="2.3" height="7" fill="#8a8a8e"/>
<rect x="7.4" y="1" width="3.6" height="1" fill="#9a9aa0"/>
<rect x="8" y="3" width="3" height="1" fill="#8ec8f8"/>
<circle cx="9.3" cy="7.6" r="3.2" fill="#b0b0b8"/>
<circle cx="9.3" cy="7.6" r="2.6" fill="url(#lens)"/>
<ellipse cx="9" cy="6.6" rx="1.1" ry="0.7" fill="#e0f4ff"/>
</svg>
<div class="a" style="left:12px;top:749px;width:15px;height:1px;background:#c8c9d1"></div>
<div class="a" style="left:81px;top:730px;width:223px;height:20px;border:1px solid #c6c7cc;border-right:0;background:#fff"></div>
<div class="t" style="left:86px;top:733px;font-size:11.7px;font-weight:bold;color:#000;-webkit-text-stroke:0">Al - FL</div>
<svg class="a" style="left:64px;top:731px" width="17" height="17" viewBox="0 0 17 17">
<rect x="0" y="0" width="17" height="17" fill="#f9f9f9"/>
<rect x="2.5" y="1.5" width="10" height="11" fill="#b4b4b8"/>
<g fill="#c4ecff"><rect x="3.1" y="2" width="1.1" height="10.5"/><rect x="5.1" y="2" width="1.1" height="10.5"/><rect x="7.1" y="2" width="1.1" height="10.5"/><rect x="9.1" y="2" width="1.1" height="10.5"/><rect x="11.1" y="2" width="1.1" height="10.5"/></g>
<rect x="3" y="2" width="9.5" height="3" fill="#d8c8ff" opacity="0.35"/>
<path d="M2.5 12.8 V2.6 Q2.5 1.5 3.6 1.5 H11.4 Q12.5 1.5 12.5 2.6 V12.8" fill="none" stroke="#6a9aa0" stroke-width="0.9"/>
<path d="M3.6 1.5 H11.4" stroke="#8a8a90" stroke-width="0.9"/>
<path d="M1.2 15.6 Q1.2 12.6 3.6 12.6 Q6.4 12.6 6.8 15.6 Z" fill="#54a82c"/>
<rect x="6.6" y="13" width="2.4" height="2.4" fill="#e4701e"/>
<rect x="1.5" y="15.2" width="10.5" height="1" fill="#7a6080"/>
<path d="M8.4 11.6 H11.9 V10.2 L15.8 13 L11.9 15.8 V14.4 H8.4 Z" fill="#a4d818" stroke="#229a16" stroke-width="0.8"/>
</svg>
<svg class="a" style="left:51px;top:740px" width="8" height="5" viewBox="0 0 8 5"><path d="M0 0.5 H7.5 L3.75 4.5 Z" fill="#6c6e7c"/></svg>
<div class="a" style="left:99px;top:749px;width:205px;height:20px;border:1px solid #c6c7cc;border-right:0;border-bottom:0;background:#fff"></div>
<div class="t" style="left:104px;top:753px;font-size:10.8px;color:#000">017040000037</div>
<svg class="a" style="left:82px;top:752px" width="16" height="15" viewBox="0 0 16 15">
<rect x="0" y="0" width="16" height="14" fill="#fbfbfb"/>
<rect x="1" y="1.8" width="14" height="10.2" rx="1" fill="#d2d2d5"/>
<rect x="1.2" y="4" width="2.3" height="7" fill="#8a8a8e"/>
<rect x="7.4" y="1" width="3.6" height="1" fill="#9a9aa0"/>
<rect x="8" y="3" width="3" height="1" fill="#8ec8f8"/>
<circle cx="9.3" cy="7.6" r="3.2" fill="#b0b0b8"/>
<circle cx="9.3" cy="7.6" r="2.6" fill="url(#lens)"/>
<ellipse cx="9" cy="6.6" rx="1.1" ry="0.7" fill="#e0f4ff"/>
</svg>
<svg class="a" style="left:17px;top:204px" width="6" height="9" viewBox="0 0 6 9"><path d="M1 0.5 L5.2 4.5 L1 8.5 Z" fill="#151520"/></svg>
<div class="a" style="left:311px;top:457px;width:3px;height:1px;background:#70727e"></div>
<div class="a" style="left:311px;top:459px;width:3px;height:1px;background:#70727e"></div>
<div class="a" style="left:311px;top:461px;width:3px;height:1px;background:#70727e"></div>
<div class="a" style="left:311px;top:463px;width:3px;height:1px;background:#70727e"></div>
<div class="a" style="left:311px;top:465px;width:3px;height:1px;background:#70727e"></div>
<div class="a" style="left:311px;top:467px;width:3px;height:1px;background:#70727e"></div>
<div class="a" style="left:311px;top:469px;width:3px;height:1px;background:#70727e"></div>
<div class="t" style="left:319px;top:162px;font-size:10.5px;color:#0c0c14">Search devices</div>
<svg class="a" style="left:396px;top:158px" width="15" height="16" viewBox="0 0 15 16">
<rect x="0.5" y="3.5" width="12" height="12" fill="#dcdde3" stroke="#9c9daa" stroke-width="1"/>
<rect x="2.5" y="5.5" width="8" height="8" fill="#f4f5f8" stroke="#d6d7de" stroke-width="0.8"/>
<path d="M1.6 9.4 L5.4 14.3 L13 2.2" fill="none" stroke="#1e1e34" stroke-width="1.7" stroke-linejoin="bevel"/>
</svg>
<div class="t" style="left:412px;top:162px;font-size:10.6px;color:#0c0c14">X1</div>
<svg class="a" style="left:434px;top:158px" width="15" height="16" viewBox="0 0 15 16">
<rect x="0.5" y="3.5" width="12" height="12" fill="#dcdde3" stroke="#9c9daa" stroke-width="1"/>
<rect x="2.5" y="5.5" width="8" height="8" fill="#f4f5f8" stroke="#d6d7de" stroke-width="0.8"/>
<path d="M1.6 9.4 L5.4 14.3 L13 2.2" fill="none" stroke="#1e1e34" stroke-width="1.7" stroke-linejoin="bevel"/>
</svg>
<div class="t" style="left:450px;top:162px;font-size:10.6px;color:#0c0c14">X1-P</div>
<svg class="a" style="left:482px;top:158px" width="15" height="16" viewBox="0 0 15 16">
<rect x="0.5" y="3.5" width="12" height="12" fill="#dcdde3" stroke="#9c9daa" stroke-width="1"/>
<rect x="2.5" y="5.5" width="8" height="8" fill="#f4f5f8" stroke="#d6d7de" stroke-width="0.8"/>
<path d="M1.6 9.4 L5.4 14.3 L13 2.2" fill="none" stroke="#1e1e34" stroke-width="1.7" stroke-linejoin="bevel"/>
</svg>
<div class="t" style="left:498px;top:162px;font-size:10.6px;color:#0c0c14">X2</div>
<svg class="a" style="left:520px;top:161px" width="13" height="13" viewBox="0 0 13 13">
<defs><radialGradient id="rg" cx="0.4" cy="0.35" r="0.7"><stop offset="0" stop-color="#b8c8ff"/><stop offset="1" stop-color="#3a5cc8"/></radialGradient></defs>
<circle cx="6.5" cy="6.5" r="5.8" fill="#f4f4f6" stroke="#8e909c" stroke-width="1.1"/>
<circle cx="6.5" cy="6.5" r="4.3" fill="#fff" stroke="#c9cad2" stroke-width="0.8"/>
</svg>
<div class="t" style="left:537px;top:162px;font-size:10.6px;color:#0c0c14">Assigned</div>
<svg class="a" style="left:589px;top:161px" width="13" height="13" viewBox="0 0 13 13">
<defs><radialGradient id="rg" cx="0.4" cy="0.35" r="0.7"><stop offset="0" stop-color="#b8c8ff"/><stop offset="1" stop-color="#3a5cc8"/></radialGradient></defs>
<circle cx="6.5" cy="6.5" r="5.8" fill="#f4f4f6" stroke="#8e909c" stroke-width="1.1"/>
<circle cx="6.5" cy="6.5" r="4.3" fill="#fff" stroke="#c9cad2" stroke-width="0.8"/>
</svg>
<div class="t" style="left:605px;top:162px;font-size:10.3px;color:#0c0c14">Unassigned</div>
<svg class="a" style="left:670px;top:161px" width="13" height="13" viewBox="0 0 13 13">
<defs><radialGradient id="rg" cx="0.4" cy="0.35" r="0.7"><stop offset="0" stop-color="#b8c8ff"/><stop offset="1" stop-color="#3a5cc8"/></radialGradient></defs>
<circle cx="6.5" cy="6.5" r="5.8" fill="#f4f4f6" stroke="#8e909c" stroke-width="1.1"/>
<circle cx="6.5" cy="6.5" r="4.3" fill="#fff" stroke="#c9cad2" stroke-width="0.8"/>
<circle cx="6.5" cy="6.5" r="3" fill="url(#rg)"/><circle cx="6.5" cy="6.5" r="3" fill="none" stroke="#3048a8" stroke-width="0.6"/></svg>
<div class="t" style="left:687px;top:162px;font-size:10.6px;color:#0c0c14">All</div>
<div class="a" style="left:706px;top:158px;width:146px;height:22px;border:1px solid #a9abb6;border-radius:3px;background:linear-gradient(#f0f0f3,#e2e3e8)"></div>
<div class="t" style="left:706px;top:163px;width:146px;text-align:center;font-size:10.6px;color:#0c0c14">Search</div>
<div class="a" style="left:319px;top:184px;width:1253px;height:351px;border:1px solid #9e9fab;background:#fff"></div>
<div class="a" style="left:320px;top:185px;width:1251px;height:20px;background:linear-gradient(#f6f6f8,#eeeff2)"></div>
<div class="a" style="left:320px;top:205px;width:1251px;height:1px;background:#c3c4cc"></div>
<div class="a" style="left:336px;top:206px;width:1235px;height:60px;background:#f4f4dc"></div>
<div class="a" style="left:320px;top:206px;width:15px;height:60px;background:#f3f4f7"></div>
<div class="a" style="left:320px;top:266px;width:1251px;height:1px;background:#cfd0d6"></div>
<div class="a" style="left:335px;top:185px;width:1px;height:81px;background:#cfd0d6"></div>
<div class="a" style="left:355px;top:185px;width:1px;height:81px;background:#cfd0d6"></div>
<div class="a" style="left:455px;top:185px;width:1px;height:81px;background:#cfd0d6"></div>
<div class="a" style="left:555px;top:185px;width:1px;height:81px;background:#cfd0d6"></div>
<div class="a" style="left:715px;top:185px;width:1px;height:81px;background:#cfd0d6"></div>
<div class="a" style="left:845px;top:185px;width:1px;height:81px;background:#cfd0d6"></div>
<div class="a" style="left:985px;top:185px;width:1px;height:81px;background:#cfd0d6"></div>
<div class="a" style="left:1125px;top:185px;width:1px;height:81px;background:#cfd0d6"></div>
<div class="a" style="left:1265px;top:185px;width:1px;height:81px;background:#cfd0d6"></div>
<div class="a" style="left:1425px;top:185px;width:1px;height:81px;background:#cfd0d6"></div>
<div class="t" style="left:355px;top:189px;width:100px;text-align:center;font-size:10.5px;color:#0c0c14">Vehicle</div>
<div class="t" style="left:359.5px;top:209px;font-size:10.9px;color:#000;white-space:pre;max-width:1212px;overflow:hidden">BMW740i<br>G-Force: 0.55</div>
<div class="t" style="left:455px;top:189px;width:100px;text-align:center;font-size:10.5px;color:#0c0c14">Device</div>
<div class="t" style="left:459.5px;top:209px;font-size:10.9px;color:#000;white-space:pre;max-width:1112px;overflow:hidden">017040000038<br>Type: X1</div>
<div class="t" style="left:555px;top:189px;width:160px;text-align:center;font-size:10.5px;color:#0c0c14">Resolution, Sound and Sleep</div>
<div class="t" style="left:559.5px;top:209px;font-size:10.9px;color:#000;white-space:pre;max-width:1012px;overflow:hidden">Resolution: 1024x768<br>Sleep mode: 30 min<br>Sound enabled: Yes</div>
<div class="t" style="left:715px;top:189px;width:130px;text-align:center;font-size:10.5px;color:#0c0c14">Shock Event</div>
<div class="t" style="left:719.5px;top:209px;font-size:10.9px;color:#000;white-space:pre;max-width:852px;overflow:hidden">Length: 16 | Led: On<br>G-Forces: 0.55/0.30</div>
<div class="t" style="left:845px;top:189px;width:140px;text-align:center;font-size:10.5px;color:#0c0c14">Yellow Wire Event</div>
<div class="t" style="left:849.5px;top:209px;font-size:10.9px;color:#000;white-space:pre;max-width:722px;overflow:hidden">Length: 10 | Led: Off<br>Yellow wire: not set<br>Wi-Fi transfer: disabled<br>Keep events: 3 days</div>
<div class="t" style="left:985px;top:189px;width:140px;text-align:center;font-size:10.5px;color:#0c0c14">Blue Wire Event</div>
<div class="t" style="left:989.5px;top:209px;font-size:10.9px;color:#000;white-space:pre;max-width:582px;overflow:hidden">Length: 30 | Led: Off<br>Blue wire: not set<br>Wi-Fi transfer: enabled</div>
<div class="t" style="left:1125px;top:189px;width:140px;text-align:center;font-size:10.5px;color:#0c0c14">Green Wire Event</div>
<div class="t" style="left:1129.5px;top:209px;font-size:10.9px;color:#000;white-space:pre;max-width:442px;overflow:hidden">Length: 30 | Led: Off<br>Green wire: not set<br>Wi-Fi transfer: enabled</div>
<div class="t" style="left:1265px;top:189px;width:160px;text-align:center;font-size:10.5px;color:#0c0c14">Periodic Event</div>
<div class="t" style="left:1269.5px;top:209px;font-size:10.9px;color:#000;white-space:pre;max-width:302px;overflow:hidden">Disabled | Length: 8 | Led: Off<br>Type: periodic<br>Trigger every: 120 min</div>
<div class="t" style="left:1425px;top:189px;width:160px;text-align:center;font-size:10.5px;color:#0c0c14">Speed Event</div>
<div class="t" style="left:1429.5px;top:209px;font-size:10.9px;color:#000;white-space:pre;max-width:142px;overflow:hidden">Disabled | Length: 8 | Led: Off<br>Speeds: 60.00 MPH/80.00 MPH<br>Trigger after: 5 sec</div>
<div class="a" style="left:336px;top:206px;width:19px;height:60px;border:1px dotted #000"></div>
<svg class="a" style="left:339px;top:226px" width="15" height="16" viewBox="0 0 15 16">
<rect x="0.5" y="3.5" width="12" height="12" fill="#dcdde3" stroke="#9c9daa" stroke-width="1"/>
<rect x="2.5" y="5.5" width="8" height="8" fill="#f4f5f8" stroke="#d6d7de" stroke-width="0.8"/>
<path d="M1.6 9.4 L5.4 14.3 L13 2.2" fill="none" stroke="#1e1e34" stroke-width="1.7" stroke-linejoin="bevel"/>
</svg>
<svg class="a" style="left:325px;top:231px" width="6" height="11" viewBox="0 0 6 11"><path d="M0 0.6 H5 M2.5 0.6 V10.4 M0 10.4 H5" stroke="#222" stroke-width="1.1" fill="none"/></svg>
<div class="a" style="left:499px;top:517px;width:1072px;height:17px;background:#f4f4f6"></div>
<svg class="a" style="left:320px;top:518px" width="180" height="16" viewBox="0 0 180 16">
<g fill="#6e707c">
<rect x="4" y="4.5" width="1.3" height="7"/><path d="M9 4.5 V11.5 L5.5 8 Z M13 4.5 V11.5 L9.5 8 Z"/>
<path d="M26 4.5 V11.5 L22.5 8 Z M30 4.5 V11.5 L26.5 8 Z"/>
<path d="M46.5 4.5 V11.5 L42 8 Z"/>
<path d="M135 4.5 V11.5 L139.5 8 Z"/>
<path d="M150 4.5 V11.5 L153.5 8 Z M154 4.5 V11.5 L157.5 8 Z"/>
<path d="M166.5 4.5 V11.5 L170 8 Z M170.5 4.5 V11.5 L174 8 Z"/><rect x="174.5" y="4.5" width="1.3" height="7"/>
</g></svg>
<div class="t" style="left:377px;top:520px;font-size:10.9px;color:#0c0c14">Record 1 of 1</div>
<svg class="a" style="left:504px;top:518px" width="8" height="16" viewBox="0 0 8 16"><path d="M5.5 4.5 V11.5 L1.5 8 Z" fill="#6e707c"/></svg>
<svg class="a" style="left:1560px;top:518px" width="8" height="16" viewBox="0 0 8 16"><path d="M1.5 4.5 V11.5 L5.5 8 Z" fill="#6e707c"/></svg>
<div class="a" style="left:515px;top:522px;width:932px;height:7px;border:1px solid #a2a4b0;border-radius:4px;background:linear-gradient(#e9eaee,#d8d9de)"></div>
<div class="a" style="left:939px;top:540px;width:1px;height:2px;background:#70727e"></div>
<div class="a" style="left:941px;top:540px;width:1px;height:2px;background:#70727e"></div>
<div class="a" style="left:943px;top:540px;width:1px;height:2px;background:#70727e"></div>
<div class="a" style="left:945px;top:540px;width:1px;height:2px;background:#70727e"></div>
<div class="a" style="left:947px;top:540px;width:1px;height:2px;background:#70727e"></div>
<div class="a" style="left:949px;top:540px;width:1px;height:2px;background:#70727e"></div>
<div class="a" style="left:951px;top:540px;width:1px;height:2px;background:#70727e"></div>
<div class="a" style="left:317px;top:568px;width:1253px;height:200px;border:1px solid #9e9fab;background:#fff"></div>
<div class="a" style="left:476px;top:548px;width:77px;height:21px;border:1px solid #a2a4b0;box-shadow:inset 1px 1px 0 #f8f8fa,inset -1px 0 0 #f4f4f6;background:linear-gradient(#e6e6ea,#dcdde2)"></div>
<div class="t" style="left:476px;top:553px;width:77px;text-align:center;font-size:10.5px;color:#2a2a36">Shock Event</div>
<div class="a" style="left:553px;top:548px;width:104px;height:21px;border:1px solid #a2a4b0;box-shadow:inset 1px 1px 0 #f8f8fa,inset -1px 0 0 #f4f4f6;background:linear-gradient(#e6e6ea,#dcdde2)"></div>
<div class="t" style="left:553px;top:553px;width:104px;text-align:center;font-size:10.5px;color:#2a2a36">Yellow Wire Event</div>
<div class="a" style="left:657px;top:548px;width:94px;height:21px;border:1px solid #a2a4b0;box-shadow:inset 1px 1px 0 #f8f8fa,inset -1px 0 0 #f4f4f6;background:linear-gradient(#e6e6ea,#dcdde2)"></div>
<div class="t" style="left:657px;top:553px;width:94px;text-align:center;font-size:10.5px;color:#2a2a36">Blue Wire Event</div>
<div class="a" style="left:751px;top:548px;width:103px;height:21px;border:1px solid #a2a4b0;box-shadow:inset 1px 1px 0 #f8f8fa,inset -1px 0 0 #f4f4f6;background:linear-gradient(#e6e6ea,#dcdde2)"></div>
<div class="t" style="left:751px;top:553px;width:103px;text-align:center;font-size:10.5px;color:#2a2a36">Green Wire Event</div>
<div class="a" style="left:854px;top:548px;width:86px;height:21px;border:1px solid #a2a4b0;box-shadow:inset 1px 1px 0 #f8f8fa,inset -1px 0 0 #f4f4f6;background:linear-gradient(#e6e6ea,#dcdde2)"></div>
<div class="t" style="left:854px;top:553px;width:86px;text-align:center;font-size:10.5px;color:#2a2a36">Periodic Event</div>
<div class="a" style="left:940px;top:548px;width:79px;height:21px;border:1px solid #a2a4b0;box-shadow:inset 1px 1px 0 #f8f8fa,inset -1px 0 0 #f4f4f6;background:linear-gradient(#e6e6ea,#dcdde2)"></div>
<div class="t" style="left:940px;top:553px;width:79px;text-align:center;font-size:10.5px;color:#2a2a36">Speed Event</div>
<div class="a" style="left:1019px;top:548px;width:114px;height:21px;border:1px solid #a2a4b0;box-shadow:inset 1px 1px 0 #f8f8fa,inset -1px 0 0 #f4f4f6;background:linear-gradient(#e6e6ea,#dcdde2)"></div>
<div class="t" style="left:1019px;top:553px;width:114px;text-align:center;font-size:10.5px;color:#2a2a36">Remote Panic Event</div>
<div class="a" style="left:320px;top:546px;width:157px;height:23px;border:1px solid #9e9fab;border-bottom:0;background:#fff"></div>
<div class="a" style="left:318px;top:568px;width:3px;height:1px;background:#9e9fab"></div>
<div class="a" style="left:321px;top:568px;width:155px;height:1px;background:#fff"></div>
<div class="t" style="left:330px;top:552px;font-size:10.6px;color:#0c0c14">Resolution, Sound and Sleep</div>
<div class="t" style="left:324px;top:625px;font-size:10.8px;color:#0c0c14">Resolution</div>
<div class="a" style="left:384px;top:578px;width:287px;height:106px;border:1px solid #adafb9;background:#fff"></div>
<svg class="a" style="left:390px;top:588px" width="13" height="13" viewBox="0 0 13 13">
<defs><radialGradient id="rg" cx="0.4" cy="0.35" r="0.7"><stop offset="0" stop-color="#b8c8ff"/><stop offset="1" stop-color="#3a5cc8"/></radialGradient></defs>
<circle cx="6.5" cy="6.5" r="5.8" fill="#f4f4f6" stroke="#8e909c" stroke-width="1.1"/>
<circle cx="6.5" cy="6.5" r="4.3" fill="#fff" stroke="#c9cad2" stroke-width="0.8"/>
</svg>
<div class="t" style="left:407.5px;top:589px;font-size:10.5px;color:#0c0c14">1600x1200</div>
<svg class="a" style="left:390px;top:612px" width="13" height="13" viewBox="0 0 13 13">
<defs><radialGradient id="rg" cx="0.4" cy="0.35" r="0.7"><stop offset="0" stop-color="#b8c8ff"/><stop offset="1" stop-color="#3a5cc8"/></radialGradient></defs>
<circle cx="6.5" cy="6.5" r="5.8" fill="#f4f4f6" stroke="#8e909c" stroke-width="1.1"/>
<circle cx="6.5" cy="6.5" r="4.3" fill="#fff" stroke="#c9cad2" stroke-width="0.8"/>
<circle cx="6.5" cy="6.5" r="3" fill="url(#rg)"/><circle cx="6.5" cy="6.5" r="3" fill="none" stroke="#3048a8" stroke-width="0.6"/></svg>
<div class="t" style="left:407.5px;top:613px;font-size:10.5px;color:#0c0c14">1024x768</div>
<svg class="a" style="left:390px;top:636px" width="13" height="13" viewBox="0 0 13 13">
<defs><radialGradient id="rg" cx="0.4" cy="0.35" r="0.7"><stop offset="0" stop-color="#b8c8ff"/><stop offset="1" stop-color="#3a5cc8"/></radialGradient></defs>
<circle cx="6.5" cy="6.5" r="5.8" fill="#f4f4f6" stroke="#8e909c" stroke-width="1.1"/>
<circle cx="6.5" cy="6.5" r="4.3" fill="#fff" stroke="#c9cad2" stroke-width="0.8"/>
</svg>
<div class="t" style="left:407.5px;top:637px;font-size:10.5px;color:#0c0c14">800x600</div>
<svg class="a" style="left:390px;top:660px" width="13" height="13" viewBox="0 0 13 13">
<defs><radialGradient id="rg" cx="0.4" cy="0.35" r="0.7"><stop offset="0" stop-color="#b8c8ff"/><stop offset="1" stop-color="#3a5cc8"/></radialGradient></defs>
<circle cx="6.5" cy="6.5" r="5.8" fill="#f4f4f6" stroke="#8e909c" stroke-width="1.1"/>
<circle cx="6.5" cy="6.5" r="4.3" fill="#fff" stroke="#c9cad2" stroke-width="0.8"/>
</svg>
<div class="t" style="left:407.5px;top:661px;font-size:10.5px;color:#0c0c14">640x480</div>
<div class="t" style="left:325px;top:692px;font-size:10.6px;color:#0c0c14">Sleep mode</div>
<div class="a" style="left:384px;top:688px;width:287px;height:20px;border:1px solid #adafb9;border-top-color:#9a9ca6;background:#fff"></div>
<div class="t" style="left:388px;top:692px;font-size:10.6px;color:#0c0c14">30</div>
<div class="t" style="left:675px;top:692px;font-size:10.6px;color:#0c0c14">(0-1440 minutes)</div>
<svg class="a" style="left:326px;top:712px" width="15" height="16" viewBox="0 0 15 16">
<rect x="0.5" y="3.5" width="12" height="12" fill="#dcdde3" stroke="#9c9daa" stroke-width="1"/>
<rect x="2.5" y="5.5" width="8" height="8" fill="#f4f5f8" stroke="#d6d7de" stroke-width="0.8"/>
<path d="M1.6 9.4 L5.4 14.3 L13 2.2" fill="none" stroke="#1e1e34" stroke-width="1.7" stroke-linejoin="bevel"/>
</svg>
<div class="t" style="left:343px;top:716px;font-size:10.6px;color:#0c0c14">Sound enabled</div>
<div class="a" style="left:2px;top:779px;width:1579px;height:50px;background:#404040"></div>
<div class="a" style="left:26px;top:790px;width:185px;height:30px;background:#80818d"></div>
<div class="t" style="left:26px;top:799px;width:185px;text-align:center;font-size:10.6px;color:#fff;-webkit-text-stroke:0">Save (Resolution, Sound and Sleep)</div>
<div class="a" style="left:224px;top:790px;width:185px;height:30px;background:#80818d"></div>
<div class="t" style="left:224px;top:799px;width:185px;text-align:center;font-size:10.6px;color:#fff;-webkit-text-stroke:0">Restore Default Settings</div>
<div class="a" style="left:422px;top:790px;width:185px;height:30px;background:#80818d"></div>
<div class="t" style="left:422px;top:799px;width:185px;text-align:center;font-size:10.6px;color:#fff;-webkit-text-stroke:0">Select All</div>
<div class="a" style="left:620px;top:790px;width:185px;height:30px;background:#80818d"></div>
<div class="t" style="left:620px;top:799px;width:185px;text-align:center;font-size:10.6px;color:#fff;-webkit-text-stroke:0">Unselect All</div>
<div class="a" style="left:818px;top:790px;width:185px;height:30px;background:#80818d"></div>
<div class="t" style="left:818px;top:799px;width:185px;text-align:center;font-size:10.6px;color:#fff;-webkit-text-stroke:0">Export/Print Selected Devices</div>
<div class="a" style="left:1016px;top:790px;width:185px;height:30px;background:#80818d"></div>
<div class="t" style="left:1016px;top:799px;width:185px;text-align:center;font-size:10.6px;color:#fff;-webkit-text-stroke:0">Export/Print All Devices</div>
</body></html>
